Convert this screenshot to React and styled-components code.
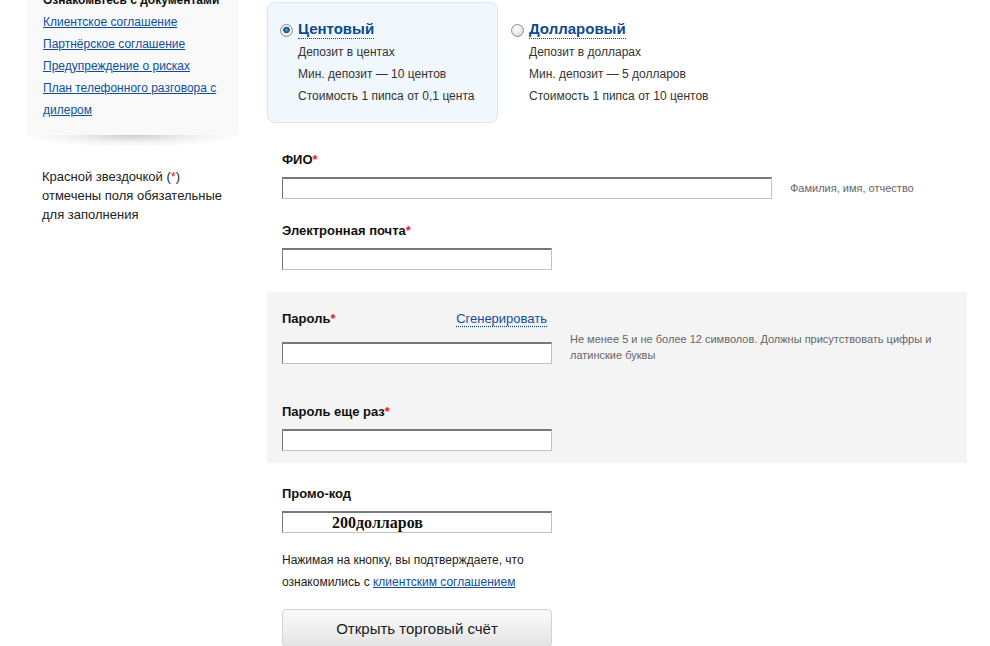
import styled, { createGlobalStyle } from "styled-components";

const Global = createGlobalStyle`
    html, body {
        margin: 0;
        padding: 0;
        background: #fff;
    }
    body {
        font-family: "Liberation Sans", Arial, sans-serif;
        color: #222;
        overflow: hidden;
    }
`

const colores = {
    enlace: "#0e4f9c",
    titulo: "#0c4a8e",
    rojo: "#e3232b",
    gris: "#666",
}

const Pagina = styled.div`
    display: flex;
    margin-top: -30px;
    width: 990px;
`
const Lateral = styled.aside`
    width: 267px;
    padding-left: 27px;
    box-sizing: border-box;
    flex-shrink: 0;
`
const Documentos = styled.div`
    position: relative;
    width: 212px;
    background: #f9f9f9;
    padding: 19px 10px 14px 16px;
    box-sizing: border-box;

    &::after {
        content: "";
        position: absolute;
        left: 0;
        right: 0;
        top: 100%;
        height: 12px;
        background: radial-gradient(ellipse 52% 100% at 50% 0, rgba(0, 0, 0, 0.2), rgba(0, 0, 0, 0.06) 55%, rgba(0, 0, 0, 0) 100%);
    }

    h4 {
        margin: 0;
        font-size: 12px;
        line-height: 22px;
        color: #111;
    }
`
const EnlaceDoc = styled.a`
    display: block;
    font-size: 12px;
    line-height: 22px;
    color: ${colores.enlace};
    text-decoration: underline;
`
const Nota = styled.p`
    margin: 32px 0 0 15px;
    font-size: 13px;
    line-height: 19px;
    color: #222;
    width: 190px;
`
const Estrella = styled.span`
    color: ${colores.rojo};
`
const Principal = styled.main`
    width: 700px;
    padding-top: 32px;
`
const Tipos = styled.div`
    display: flex;
`
const Tipo = styled.div`
    width: 231px;
    box-sizing: border-box;
    padding: 16px 10px 15px 12px;
    border: 1px solid ${p => p.activo ? "#d6e6f4" : "transparent"};
    background: ${p => p.activo ? "#f0f7fd" : "transparent"};
    border-radius: 8px;
    display: flex;
    gap: 5px;
`
const Radio = styled.span`
    width: 13px;
    height: 13px;
    margin-top: 5px;
    flex-shrink: 0;
    border-radius: 50%;
    box-sizing: border-box;
    border: 1px solid #8e8f8f;
    background: ${p => p.activo
        ? "radial-gradient(circle at 50% 45%, #6fa9d6 0, #1f5b8f 2.2px, #2c4d6e 3px, #f4f4f4 3.6px, #d8d8d8 100%)"
        : "radial-gradient(circle at 40% 35%, #ffffff 0, #f2f2f2 35%, #cfcfcf 100%)"};
`
const TipoTexto = styled.div`
    display: flex;
    flex-direction: column;
`
const TipoTitulo = styled.span`
    align-self: flex-start;
    font-size: 15px;
    font-weight: bold;
    line-height: 19px;
    color: ${colores.titulo};
    border-bottom: 1px dotted ${colores.titulo};
    margin-bottom: 2px;
`
const TipoLinea = styled.div`
    font-size: 12px;
    line-height: 22px;
    color: #333;
`
const Bloque = styled.div`
    padding: ${p => p.padding || "0 15px"};
    background: ${p => p.gris ? "#f4f4f4" : "transparent"};
    margin-top: ${p => p.mt || 0}px;
`
const Campo = styled.div`
    margin-top: ${p => p.mt || 0}px;
`
const Etiqueta = styled.div`
    display: flex;
    justify-content: space-between;
    width: 265px;
    font-size: 13px;
    font-weight: bold;
    line-height: 18px;
    color: #111;
    margin-bottom: ${p => p.mb ?? 8}px;
`
const Generar = styled.a`
    font-weight: normal;
    color: ${colores.enlace};
    text-decoration: underline dotted;
    text-underline-offset: 3px;
`
const Fila = styled.div`
    display: flex;
    align-items: ${p => p.align || "center"};
    gap: 18px;
`
const Entrada = styled.input`
    width: ${p => p.ancho || 270}px;
    height: 22px;
    box-sizing: border-box;
    margin: 0;
    padding: 0 0 0 ${p => p.sangria || 3}px;
    background: #fff;
    border-style: solid;
    border-width: 2px 1px 1px 1px;
    border-color: #787878 #c2c2c2 #c2c2c2 #787878;
    outline: none;
    font-family: "Liberation Serif", "Times New Roman", serif;
    font-weight: bold;
    font-size: 16px;
    color: #111;
`
const Ayuda = styled.div`
    font-size: 11px;
    line-height: 16px;
    color: ${colores.gris};
    width: ${p => p.ancho || "auto"};
    margin-bottom: ${p => p.mb || 0}px;
`
const Acuerdo = styled.p`
    margin: 16px 0 0;
    font-size: 12px;
    line-height: 22px;
    color: #222;

    a {
        color: ${colores.enlace};
        text-decoration: underline;
    }
`
const Boton = styled.button`
    margin-top: 16px;
    width: 270px;
    height: 38px;
    border: 1px solid #d2d2d2;
    border-radius: 4px;
    background: linear-gradient(#fbfbfb, #e4e4e4);
    font-family: "Liberation Sans", Arial, sans-serif;
    font-size: 15px;
    color: #1a1a1a;
    cursor: pointer;
`

const documentos = [
    "Клиентское соглашение",
    "Партнёрское соглашение",
    "Предупреждение о рисках",
    "План телефонного разговора с дилером",
]

const tipos = [
    { titulo: "Центовый", activo: true, lineas: ["Депозит в центах", "Мин. депозит — 10 центов", "Стоимость 1 пипса от 0,1 цента"] },
    { titulo: "Долларовый", activo: false, lineas: ["Депозит в долларах", "Мин. депозит — 5 долларов", "Стоимость 1 пипса от 10 центов"] },
]

const App = () => {
    return (
        <>
            <Global />
            <Pagina>
                <Lateral>
                    <Documentos>
                        <h4>Ознакомьтесь с документами</h4>
                        {documentos.map((doc) => (
                            <EnlaceDoc key={doc}>{doc}</EnlaceDoc>
                        ))}
                    </Documentos>
                    <Nota>
                        Красной звездочкой (<Estrella>*</Estrella>) отмечены поля обязательные для заполнения
                    </Nota>
                </Lateral>
                <Principal>
                    <Tipos>
                        {tipos.map((tipo) => (
                            <Tipo key={tipo.titulo} activo={tipo.activo}>
                                <Radio activo={tipo.activo} />
                                <TipoTexto>
                                    <TipoTitulo>{tipo.titulo}</TipoTitulo>
                                    {tipo.lineas.map((l) => <TipoLinea key={l}>{l}</TipoLinea>)}
                                </TipoTexto>
                            </Tipo>
                        ))}
                    </Tipos>

                    <Bloque mt={28}>
                        <Campo>
                            <Etiqueta><span>ФИО<Estrella>*</Estrella></span></Etiqueta>
                            <Fila>
                                <Entrada ancho={490} />
                                <Ayuda>Фамилия, имя, отчество</Ayuda>
                            </Fila>
                        </Campo>
                        <Campo mt={23}>
                            <Etiqueta><span>Электронная почта<Estrella>*</Estrella></span></Etiqueta>
                            <Entrada />
                        </Campo>
                    </Bloque>

                    <Bloque gris mt={22} padding="18px 15px 12px">
                        <Campo>
                            <Etiqueta mb={3}>
                                <span>Пароль<Estrella>*</Estrella></span>
                                <Generar>Сгенерировать</Generar>
                            </Etiqueta>
                            <Fila align="flex-end">
                                <Entrada />
                                <Ayuda ancho="380px" mb={1}>Не менее 5 и не более 12 символов. Должны присутствовать цифры и латинские буквы</Ayuda>
                            </Fila>
                        </Campo>
                        <Campo mt={39}>
                            <Etiqueta><span>Пароль еще раз<Estrella>*</Estrella></span></Etiqueta>
                            <Entrada />
                        </Campo>
                    </Bloque>

                    <Bloque mt={22}>
                        <Campo>
                            <Etiqueta><span>Промо-код</span></Etiqueta>
                            <Entrada sangria={49} defaultValue="200долларов" />
                        </Campo>
                        <Acuerdo>
                            Нажимая на кнопку, вы подтверждаете, что<br />
                            ознакомились с <a>клиентским соглашением</a>
                        </Acuerdo>
                        <Boton>Открыть торговый счёт</Boton>
                    </Bloque>
                </Principal>
            </Pagina>
        </>
    )
}

export default App;
